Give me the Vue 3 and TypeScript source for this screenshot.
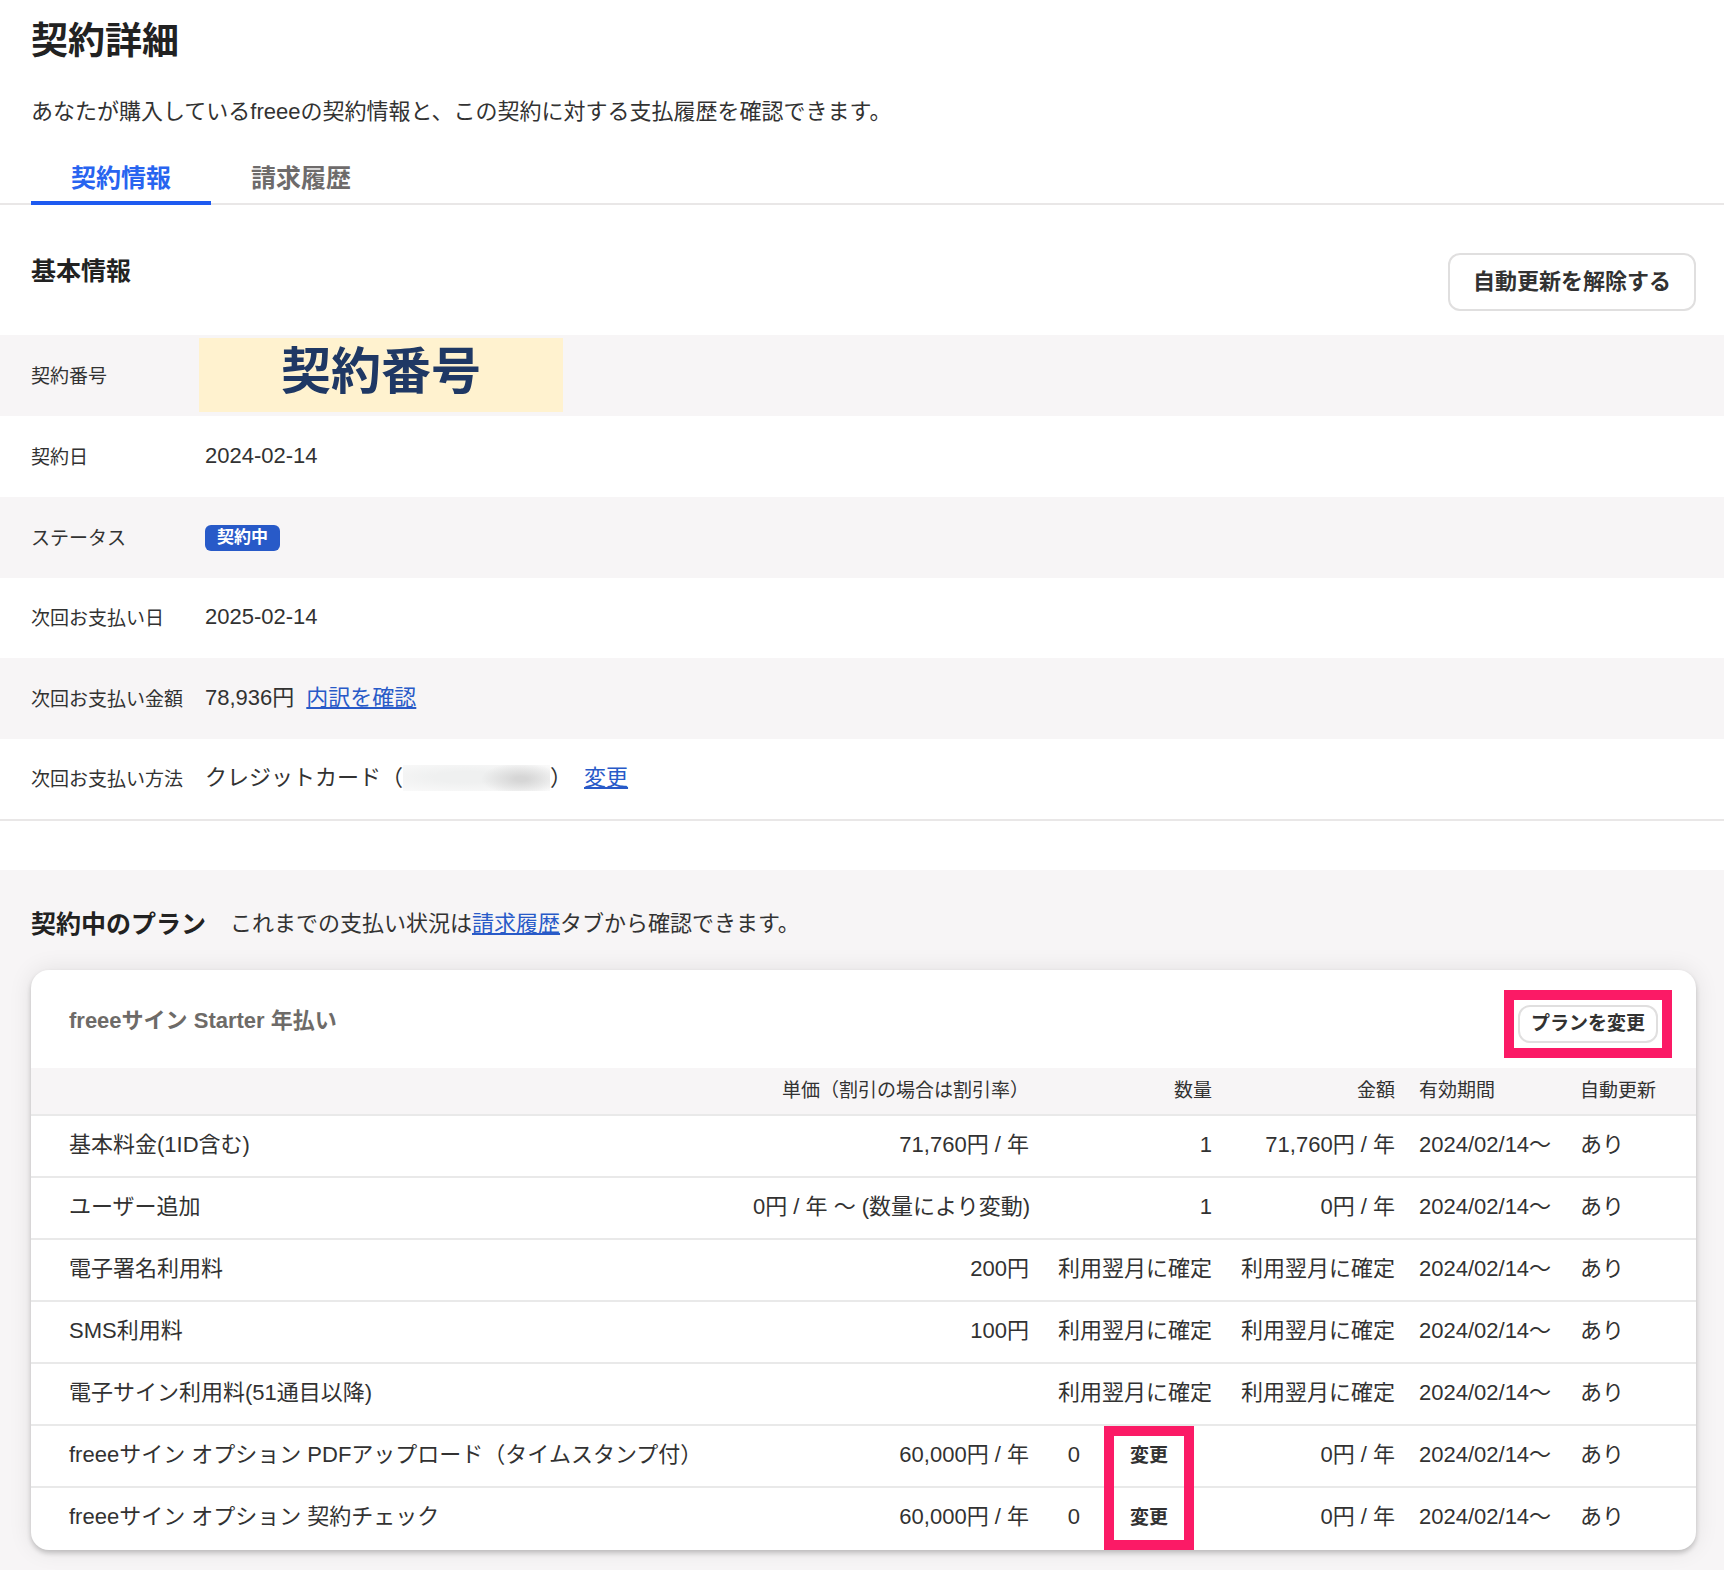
<script setup lang="ts">
interface PlanItem {
  name: string
  unitPrice: string
  quantity: string
  amount: string
  changeable?: boolean
}

const period = '2024/02/14～'
const pending = '利用翌月に確定'

const items: PlanItem[] = [
  { name: '基本料金(1ID含む)', unitPrice: '71,760円 / 年', quantity: '1', amount: '71,760円 / 年' },
  { name: 'ユーザー追加', unitPrice: '0円 / 年 ～ (数量により変動)', quantity: '1', amount: '0円 / 年' },
  { name: '電子署名利用料', unitPrice: '200円', quantity: pending, amount: pending },
  { name: 'SMS利用料', unitPrice: '100円', quantity: pending, amount: pending },
  { name: '電子サイン利用料(51通目以降)', unitPrice: '', quantity: pending, amount: pending },
  {
    name: 'freeeサイン オプション PDFアップロード（タイムスタンプ付）',
    unitPrice: '60,000円 / 年',
    quantity: '0',
    amount: '0円 / 年',
    changeable: true,
  },
  {
    name: 'freeeサイン オプション 契約チェック',
    unitPrice: '60,000円 / 年',
    quantity: '0',
    amount: '0円 / 年',
    changeable: true,
  },
]

const firstChangeable = items.findIndex((item) => item.changeable)
</script>

<template>
  <main class="page">
    <header class="intro">
      <h1>契約詳細</h1>
      <p>あなたが購入しているfreeeの契約情報と、この契約に対する支払履歴を確認できます。</p>
    </header>

    <nav class="tabs">
      <a class="tab active" href="#contract">契約情報</a>
      <a class="tab" href="#billing">請求履歴</a>
    </nav>

    <section id="contract">
      <div class="section-head">
        <h2>基本情報</h2>
        <button class="outline large" type="button">自動更新を解除する</button>
      </div>

      <dl class="details">
        <div class="detail">
          <dt>契約番号</dt>
          <dd><span class="cover">契約番号</span></dd>
        </div>
        <div class="detail">
          <dt>契約日</dt>
          <dd>2024-02-14</dd>
        </div>
        <div class="detail">
          <dt>ステータス</dt>
          <dd><span class="badge">契約中</span></dd>
        </div>
        <div class="detail">
          <dt>次回お支払い日</dt>
          <dd>2025-02-14</dd>
        </div>
        <div class="detail">
          <dt>次回お支払い金額</dt>
          <dd>78,936円<a class="after" href="#breakdown">内訳を確認</a></dd>
        </div>
        <div class="detail">
          <dt>次回お支払い方法</dt>
          <dd>クレジットカード（<span class="masked"></span>）<a class="after" href="#payment">変更</a></dd>
        </div>
      </dl>
    </section>

    <section class="plans">
      <div class="plans-head">
        <h2>契約中のプラン</h2>
        <p>これまでの支払い状況は<a href="#billing">請求履歴</a>タブから確認できます。</p>
      </div>

      <div class="card">
        <div class="card-head">
          <h3>freeeサイン Starter 年払い</h3>
          <div class="plan-action">
            <button class="outline small" type="button">プランを変更</button>
            <span class="frame around"></span>
          </div>
        </div>

        <table>
          <colgroup>
            <col />
            <col class="c-price" />
            <col class="c-amount" />
            <col class="c-amount" />
            <col class="c-period" />
            <col class="c-renew" />
          </colgroup>
          <thead>
            <tr>
              <th></th>
              <th class="num" scope="col">単価（割引の場合は割引率）</th>
              <th class="num" scope="col">数量</th>
              <th class="num" scope="col">金額</th>
              <th scope="col">有効期間</th>
              <th scope="col">自動更新</th>
            </tr>
          </thead>
          <tbody>
            <tr v-for="(item, i) in items" :key="item.name">
              <td>{{ item.name }}</td>
              <td class="num">{{ item.unitPrice }}</td>
              <td class="num quantity">
                <div v-if="item.changeable" class="editable">
                  <span>{{ item.quantity }}</span>
                  <button class="change" type="button">変更</button>
                </div>
                <template v-else>{{ item.quantity }}</template>
                <span v-if="i === firstChangeable" class="frame rows"></span>
              </td>
              <td class="num">{{ item.amount }}</td>
              <td>{{ period }}</td>
              <td>あり</td>
            </tr>
          </tbody>
        </table>
      </div>
    </section>
  </main>
</template>

<style>
body {
  margin: 0;
  background: #fff;
}
</style>

<style scoped>
.page {
  color: #323232;
  font-family: "Liberation Sans", "Noto Sans CJK JP", sans-serif;
  font-size: 22px;
  line-height: 32px;
}

h1,
h2,
h3,
p,
dl,
dd {
  margin: 0;
}

a {
  color: #285ac8;
}

button {
  font-family: inherit;
  font-weight: 700;
  color: #323232;
  background: #fff;
  cursor: pointer;
}

h1 {
  font-size: 37px;
  line-height: 48px;
  color: #222;
}

h2 {
  font-size: 25px;
  line-height: 32px;
  color: #222;
}

h3 {
  font-size: 22px;
  line-height: 32px;
  color: #6e6b68;
}

.intro {
  padding: 18px 31px 0;
}

.intro p {
  margin-top: 30px;
}

.tabs {
  display: flex;
  margin-top: 22px;
  padding-left: 31px;
  border-bottom: 2px solid #e9e7e7;
}

.tab {
  box-sizing: border-box;
  height: 55px;
  margin-bottom: -2px;
  padding: 12px 40px 0;
  border-bottom: 4px solid transparent;
  font-size: 25px;
  font-weight: 700;
  color: #6e6b6b;
  text-decoration: none;
}

.tab.active {
  color: #2864f0;
  border-color: #1e5af0;
}

.section-head {
  display: flex;
  justify-content: space-between;
  align-items: flex-start;
  padding: 48px 28px 24px 31px;
}

.section-head h2 {
  margin-top: 2px;
}

.outline {
  border: 2px solid #e0dfdf;
}

.large {
  height: 58px;
  padding: 0 23px 6px;
  border-radius: 12px;
  font-size: 22px;
}

.small {
  display: block;
  height: 38px;
  padding: 0 11px 6px;
  border-radius: 12px;
  font-size: 19px;
}

.details {
  border-bottom: 2px solid #e9e7e7;
}

.detail {
  display: flex;
  align-items: center;
  height: 81px;
  padding-left: 31px;
}

.detail:nth-child(odd) {
  background: #f7f5f6;
}

.detail:nth-child(2n + 4) {
  height: 80px;
}

dt {
  width: 174px;
  flex: none;
  padding-top: 2px;
  font-size: 19px;
}

dd {
  display: flex;
  align-items: center;
  padding-bottom: 2px;
}

.cover {
  box-sizing: border-box;
  width: 364px;
  height: 74px;
  margin-left: -6px;
  background: #fff2cf;
  color: #1f3864;
  font-size: 50px;
  font-weight: 700;
  line-height: 68px;
  text-align: center;
}

.badge {
  margin-top: 2px;
  padding: 0 12px;
  border-radius: 6px;
  background: #285ac8;
  color: #fff;
  font-size: 17px;
  font-weight: 700;
  line-height: 26px;
}

.after {
  margin-left: 12px;
}

.masked {
  width: 147px;
  height: 26px;
  background:
    radial-gradient(ellipse 40px 16px at 118px 14px, #d6d6d6 15%, transparent),
    radial-gradient(ellipse 110px 18px at 64px 12px, #eff0f0 30%, transparent),
    #fafafa;
}

.plans {
  margin-top: 49px;
  padding: 38px 28px 20px 31px;
  background: #f7f5f6;
}

.plans-head {
  display: flex;
  align-items: center;
  gap: 24px;
}

.card {
  margin-top: 30px;
  border-radius: 18px;
  background: #fff;
  box-shadow: 0 3px 5px rgba(0, 0, 0, 0.2), 0 0 24px rgba(0, 0, 0, 0.09);
}

.card-head {
  display: flex;
  justify-content: space-between;
  align-items: flex-start;
  padding: 35px 38px 25px;
}

.plan-action {
  position: relative;
}

.frame {
  position: absolute;
  border: 10px solid #fb1a66;
  box-sizing: border-box;
  pointer-events: none;
}

.around {
  inset: -15px -14px;
}

.rows {
  top: 0;
  right: 30px;
  width: 90px;
  height: calc(200% + 4px);
  z-index: 1;
}

table {
  width: 100%;
  table-layout: fixed;
  border-collapse: separate;
  border-spacing: 0;
}

.c-price {
  width: 300px;
}

.c-amount {
  width: 183px;
}

.c-period {
  width: 161px;
}

.c-renew {
  width: 128px;
}

th,
td {
  box-sizing: border-box;
  padding: 0 12px;
  border-bottom: 2px solid #e9e9e9;
  text-align: left;
  white-space: nowrap;
}

th {
  height: 48px;
  background: #f7f5f6;
  font-size: 19px;
  font-weight: 400;
}

td {
  height: 62px;
  padding-bottom: 2px;
}

th:first-child,
td:first-child {
  padding-left: 38px;
}

tbody tr:last-child td {
  border-color: transparent;
}

.num {
  text-align: right;
}

.quantity {
  position: relative;
}

.editable {
  display: flex;
  justify-content: flex-end;
  align-items: center;
  gap: 24px;
  padding-right: 18px;
}

.change {
  width: 90px;
  padding: 2px 0 0;
  border: 0;
  font-size: 19px;
  line-height: 28px;
  background: none;
}
</style>
